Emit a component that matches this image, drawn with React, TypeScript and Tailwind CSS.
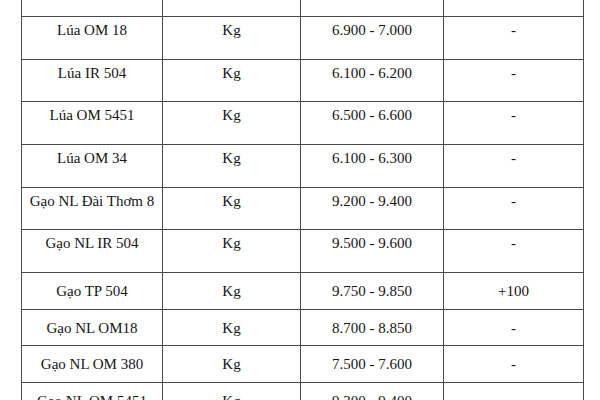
import React from "react";

type Row = { h: string; pt: string; cells: string[] };

const rows: Row[] = [
  { h: "h-[17px]", pt: "pt-0", cells: ["", "", "", ""] },
  { h: "h-[43px]", pt: "pt-[5px]", cells: ["Lúa OM 18", "Kg", "6.900 - 7.000", "-"] },
  { h: "h-[42px]", pt: "pt-[5px]", cells: ["Lúa IR 504", "Kg", "6.100 - 6.200", "-"] },
  { h: "h-[43px]", pt: "pt-[5px]", cells: ["Lúa OM 5451", "Kg", "6.500 - 6.600", "-"] },
  { h: "h-[43px]", pt: "pt-[5px]", cells: ["Lúa OM 34", "Kg", "6.100 - 6.300", "-"] },
  { h: "h-[42px]", pt: "pt-[5px]", cells: ["Gạo NL Đài Thơm 8", "Kg", "9.200 - 9.400", "-"] },
  { h: "h-[43px]", pt: "pt-[5px]", cells: ["Gạo NL IR 504", "Kg", "9.500 - 9.600", "-"] },
  { h: "h-[37px]", pt: "pt-[10px]", cells: ["Gạo TP 504", "Kg", "9.750 - 9.850", "+100"] },
  { h: "h-[36px]", pt: "pt-[10px]", cells: ["Gạo NL OM18", "Kg", "8.700 - 8.850", "-"] },
  { h: "h-[37px]", pt: "pt-[10px]", cells: ["Gạo NL OM 380", "Kg", "7.500 - 7.600", "-"] },
  { h: "h-[40px]", pt: "pt-[10px]", cells: ["Gạo NL OM 5451", "Kg", "9.300 - 9.400", "-"] },
];

export default function App() {
  return (
    <div
      className="w-[600px] h-[400px] overflow-hidden bg-white pl-[21px] text-[#151515]"
      style={{ fontFamily: '"Liberation Serif", "Times New Roman", serif' }}
    >
      <div className="w-[563px] border-x border-[#4a4a4a]">
        {rows.map((r, i) => (
          <div
            key={i}
            className={`grid grid-cols-[141px_138px_143px_139px] box-border ${r.h} ${
              i < rows.length - 1 ? "border-b border-[#4a4a4a]" : ""
            }`}
          >
            {r.cells.map((c, j) => (
              <div
                key={j}
                className={`text-center text-[15px] leading-[17px] ${r.pt} ${
                  j < 3 ? "border-r border-[#4a4a4a]" : ""
                }`}
              >
                {c}
              </div>
            ))}
          </div>
        ))}
      </div>
    </div>
  );
}
